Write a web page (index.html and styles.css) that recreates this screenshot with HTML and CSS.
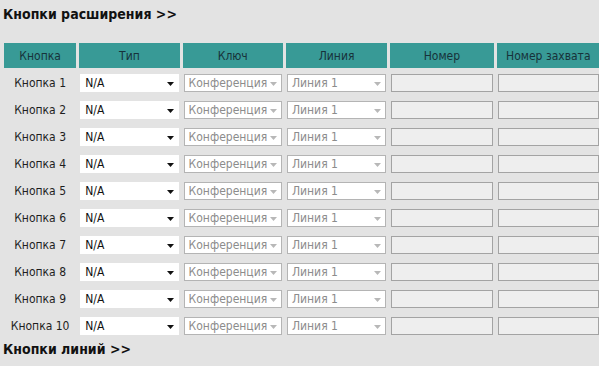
FILE: index.html
```html
<!DOCTYPE html>
<html lang="ru">
<head>
    <meta charset="UTF-8">
    <title>Кнопки расширения</title>
    <link rel="stylesheet" href="styles.css">
</head>
<body>
    <h3 class="section-title">Кнопки расширения &gt;&gt;</h3>
    <table class="keys">
        <thead>
            <tr>
                <th class="col-name">Кнопка</th>
                <th class="col-type">Тип</th>
                <th class="col-key">Ключ</th>
                <th class="col-line">Линия</th>
                <th class="col-num">Номер</th>
                <th class="col-pickup">Номер захвата</th>
            </tr>
        </thead>
        <tbody id="keyRows">
        </tbody>
    </table>
    <h3 class="section-title">Кнопки линий &gt;&gt;</h3>

    <script>
        const arrow = '<svg class="arrow" width="7" height="4" viewBox="0 0 7 4"><path d="M0 0h7L3.5 4z"/></svg>';
        const rows = document.getElementById('keyRows');
        for (let i = 1; i <= 10; i++) {
            const tr = document.createElement('tr');
            tr.innerHTML =
                `<td class="name">Кнопка ${i}</td>` +
                `<td><div class="pick pick-active"><span>N/A</span>${arrow}</div></td>` +
                `<td><div class="pick pick-off"><span>Конференция</span>${arrow}</div></td>` +
                `<td><div class="pick pick-off"><span>Линия 1</span>${arrow}</div></td>` +
                `<td><input class="field" type="text" disabled></td>` +
                `<td><input class="field" type="text" disabled></td>`;
            rows.appendChild(tr);
        }
    </script>
</body>
</html>
```

FILE: styles.css
```css
html {
    overflow: hidden;
}

body {
    margin: 0;
    padding: 0;
    background-color: #e3e3e3;
    font-family: "DejaVu Sans Condensed", "DejaVu Sans", sans-serif;
    font-size: 12px;
    color: #1e1e1e;
}

.section-title {
    margin: 0;
    padding: 6px 3px 0;
    height: 22px;
    font-size: 14px;
    font-weight: bold;
    color: #111;
}

.keys {
    border-spacing: 3px;
    margin: 12px 0 0 1px;
    table-layout: fixed;
    width: 602px;
}

.keys + .section-title {
    padding-top: 0;
}

.keys th {
    background-color: #389a96;
    color: #17323a;
    font-weight: normal;
    height: 25px;
    padding: 0;
    text-align: center;
}

.col-name { width: 72px; }
.col-type { width: 100px; }
.col-key { width: 100px; }
.col-line { width: 101px; }
.col-num { width: 103px; }
.col-pickup { width: 103px; }

.keys td {
    height: 24px;
    padding: 0 1px;
    vertical-align: middle;
}

.keys td.name {
    text-align: center;
    color: #1e1e1e;
}

.pick {
    position: relative;
    box-sizing: border-box;
    height: 18px;
    line-height: 16px;
    padding: 0 14px 0 4px;
    background: #fff;
    border: 1px solid #fff;
    overflow: hidden;
    white-space: nowrap;
}

.pick .arrow {
    position: absolute;
    right: 4px;
    top: 7px;
}

.pick-active {
    color: #111;
}

.pick-active .arrow {
    fill: #111;
}

.pick-off {
    border-color: #b4b4b4;
    color: #8c8c8c;
}

.pick-off .arrow {
    fill: #b8b8b8;
}

.field {
    display: block;
    box-sizing: border-box;
    width: 100%;
    height: 18px;
    margin: 0;
    background: #eeeeee;
    border: 1px solid #a3a3a3;
}
```
